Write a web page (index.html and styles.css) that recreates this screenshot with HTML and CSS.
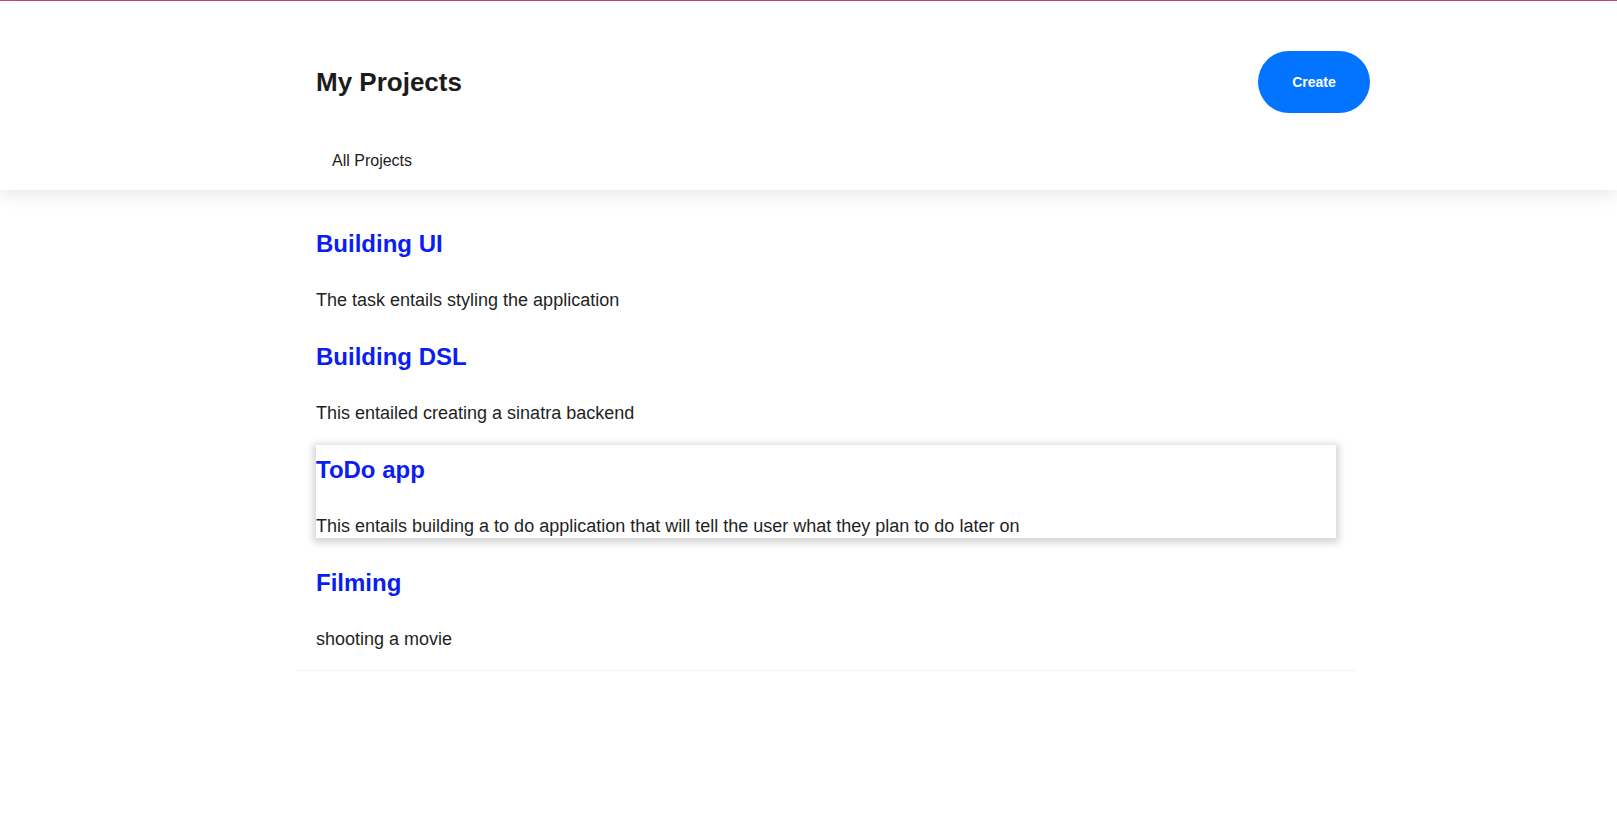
FILE: index.html
```html
<!DOCTYPE html>
<html lang="en">
<head>
<meta charset="utf-8">
<title>My Projects</title>
<link rel="stylesheet" href="styles.css">
</head>
<body>
<div class="topline"></div>
<header class="header">
  <div class="header-inner">
    <div class="title-row">
      <h1 class="page-title">My Projects</h1>
      <button class="create-btn">Create</button>
    </div>
    <nav class="tabs">
      <a class="tab" href="#">All Projects</a>
    </nav>
  </div>
</header>
<main class="list">
  <div class="item">
    <h2 class="item-title"><a href="#">Building UI</a></h2>
    <p class="item-desc">The task entails styling the application</p>
  </div>
  <div class="item">
    <h2 class="item-title"><a href="#">Building DSL</a></h2>
    <p class="item-desc">This entailed creating a sinatra backend</p>
  </div>
  <div class="item item-active">
    <h2 class="item-title"><a href="#">ToDo app</a></h2>
    <p class="item-desc">This entails building a to do application that will tell the user what they plan to do later on</p>
  </div>
  <div class="item">
    <h2 class="item-title"><a href="#">Filming</a></h2>
    <p class="item-desc">shooting a movie</p>
  </div>
</main>
</body>
</html>
```

FILE: styles.css
```css
* { box-sizing: border-box; }
html, body {
  margin: 0;
  padding: 0;
  background: #ffffff;
  font-family: "Liberation Sans", Arial, sans-serif;
  color: #1f1f1f;
}
.topline {
  height: 1px;
  background: #c2477a;
}
.header {
  background: #ffffff;
  box-shadow: 0 4px 18px rgba(0, 0, 0, 0.1);
  position: relative;
  z-index: 1;
  padding-bottom: 20px;
}
.header-inner {
  margin: 0 247px 0 316px;
}
.title-row {
  display: flex;
  align-items: center;
  justify-content: space-between;
  padding-top: 50px;
}
.page-title {
  margin: 0;
  font-size: 26px;
  font-weight: 700;
  color: #1c1c1c;
  line-height: 30px;
}
.create-btn {
  width: 112px;
  height: 62px;
  border: none;
  border-radius: 31px;
  background: #0274ff;
  color: #ffffff;
  font-family: "Liberation Sans", Arial, sans-serif;
  font-size: 14px;
  font-weight: 700;
  cursor: pointer;
}
.tabs {
  display: flex;
  margin-top: 39px;
}
.tab {
  padding: 0 16px;
  font-size: 16px;
  line-height: 18px;
  color: #1c1c1c;
  text-decoration: none;
}
.list {
  width: 1060px;
  margin-left: 296px;
  padding: 29px 20px 19px;
  border-bottom: 1px solid #f3f3f3;
  display: flex;
  flex-direction: column;
  gap: 20px;
}
.item {
  height: 93px;
  padding-top: 11px;
  display: flex;
  flex-direction: column;
}
.item-active {
  box-shadow: 0 2px 7px 3px rgba(0, 0, 0, 0.17);
}
.item-title {
  margin: 0;
  font-size: 24px;
  line-height: 28px;
  font-weight: 700;
}
.item-title a {
  color: #0a1ef2;
  text-decoration: none;
}
.item-desc {
  margin: 32px 0 0;
  font-size: 18px;
  line-height: 21px;
  color: #1f1f1f;
}
```
